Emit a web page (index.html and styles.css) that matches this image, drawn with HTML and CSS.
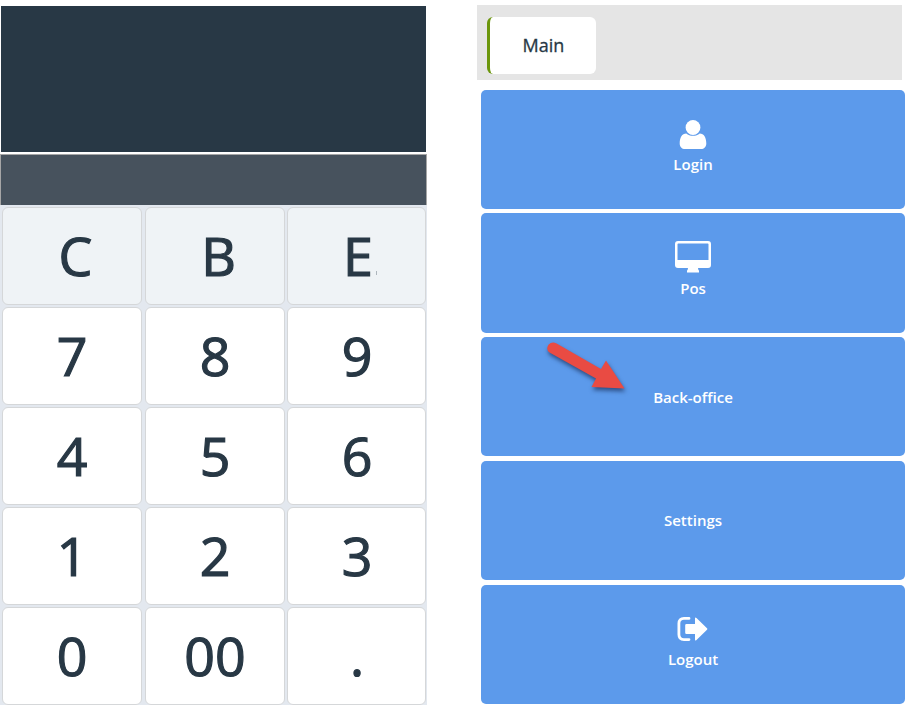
FILE: index.html
```html
<!DOCTYPE html>
<html lang="en">
<head>
<meta charset="utf-8">
<title>POS</title>
<link rel="stylesheet" href="styles.css">
</head>
<body>
<main class="app">
  <section class="pad">
    <div class="display"></div>
    <div class="entry"></div>
    <div class="keys">
      <div class="key fn">C</div><div class="key fn">B</div><div class="key fn key-enter">E</div>
      <div class="key">7</div><div class="key">8</div><div class="key">9</div>
      <div class="key">4</div><div class="key">5</div><div class="key">6</div>
      <div class="key">1</div><div class="key">2</div><div class="key">3</div>
      <div class="key">0</div><div class="key">00</div><div class="key">.</div>
    </div>
  </section>
  <section class="side">
    <nav class="tabs"><div class="tab">Main</div></nav>
    <div class="tiles">
      <div class="tile">
        <svg class="icon" width="28" height="30" viewBox="0 0 28 30"><path d="M7.3 13.500C3 13.500 .7 17.500 .7 23.500C.7 27 3 29 6 29H22C25 29 27.300 27 27.300 23.500C27.300 17.500 25 13.500 20.700 13.500C19 15.100 16.700 15.800 14 15.800C11.300 15.800 9 15.100 7.300 13.500Z"/><circle cx="14" cy="7.500" r="7.400"/></svg>
        <span>Login</span>
      </div>
      <div class="tile">
        <svg class="icon icon-pos" width="36" height="32" viewBox="0 0 36 32"><path fill-rule="evenodd" d="M3 0H33Q36 0 36 3V24Q36 27 33 27H23Q23 28.500 24 29.700V31.500H12V29.700Q13 28.500 13 27H3Q0 27 0 24V3Q0 0 3 0ZM3.300 2.500Q2.500 2.500 2.500 3.300V19H33.500V3.300Q33.500 2.500 32.700 2.500Z"/></svg>
        <span>Pos</span>
      </div>
      <div class="tile"><span class="low">Back-office</span></div>
      <div class="tile"><span>Settings</span></div>
      <div class="tile">
        <svg class="icon icon-out" width="30" height="24" viewBox="0 0 30 24"><path class="line" d="M11 1.400H6Q.9 1.400 .9 6.500V17.500Q.9 22.600 6 22.600H11"/><path d="M8.500 7H17V1.400Q17 -.3 18.500 1L29 11.200Q29.900 12 29 12.800L18.500 23Q17 24.300 17 22.600V17H8.500Q7.200 17 7.200 15.700V8.300Q7.200 7 8.500 7Z"/></svg>
        <span>Logout</span>
      </div>
    </div>
  </section>
</main>
<svg class="pointer" width="100" height="70" viewBox="0 0 100 70"><path d="M16.600 9.500Q11.800 7.200 8.500 10.800Q5.500 15.500 9.500 18.500L56 44.500L51.500 53L84.500 54.500L66 26.500L61 35Z"/></svg>
</body>
</html>
```
FILE: styles.css
```css
* { box-sizing: border-box; }
body { margin: 0; background: #fff; font-family: "Open Sans", "Noto Sans", sans-serif; color: #283845; overflow: hidden; }
.app { display: flex; align-items: flex-start; gap: 50px; width: 905px; height: 705px; overflow: hidden; }
.pad { width: 427px; padding-top: 6px; flex: none; }
.display { height: 146px; margin: 0 1px 2px; background: #283845; }
.entry { height: 51px; background: #47525d; border: 1px solid #a6a6a6; border-bottom: 0; }
.keys { display: grid; grid-template-columns: 140px 140px 139px; grid-auto-rows: 98px; column-gap: 3px; row-gap: 2px; padding: 2px 0 2px 2px; background: #e3e8ef; }
.key { display: flex; align-items: center; justify-content: center; background: #fff; border: 1px solid #d5d7d9; border-radius: 6px; font-size: 53.700px; line-height: 74px; -webkit-text-stroke: 1.2px #283845; }
.key:nth-child(3n) { margin: 0 1px 0 -1px; padding-left: 1px; }
.fn { background: #eff3f6; padding-left: 7px; }
.key.key-enter { position: relative; padding-left: 3px; }
.key-enter::after { content: ""; position: absolute; left: 88px; top: 63px; width: 1px; height: 4px; background: #aeb6bd; }
.side { width: 428px; padding-top: 5px; flex: none; }
.tabs { width: 425px; height: 75px; padding: 12px 10px; background: #e5e5e5; }
.tab { width: 109px; height: 57px; padding-left: 1px; background: #fff; border-left: 3px solid #6b960c; border-radius: 6px; font-size: 18px; line-height: 57px; text-align: center; -webkit-text-stroke: .3px #283845; }
.tiles { display: grid; grid-template-rows: repeat(5, 119.2px); row-gap: 4.55px; padding: 9.7px 0 0 4px; }
.tile { display: flex; flex-direction: column; align-items: center; justify-content: center; background: #5c9aeb; border-radius: 5px; color: #fff; font-size: 15px; font-weight: 600; line-height: 20px; }
.tile span { margin-bottom: 1px; }
.tile .low { margin-bottom: 0; }
.icon { fill: #fff; margin: -3px 0 4px; overflow: visible; }
.icon-pos { margin: -6.5px 0 5px; }
.icon-out { margin: -1px 0 8px; }
.line { fill: none; stroke: #fff; stroke-width: 2.800; stroke-linecap: round; }
.pointer { position: absolute; left: 540px; top: 334px; fill: #e94b43; filter: drop-shadow(1px 3px 2px rgba(20, 40, 80, .65)); }
```
